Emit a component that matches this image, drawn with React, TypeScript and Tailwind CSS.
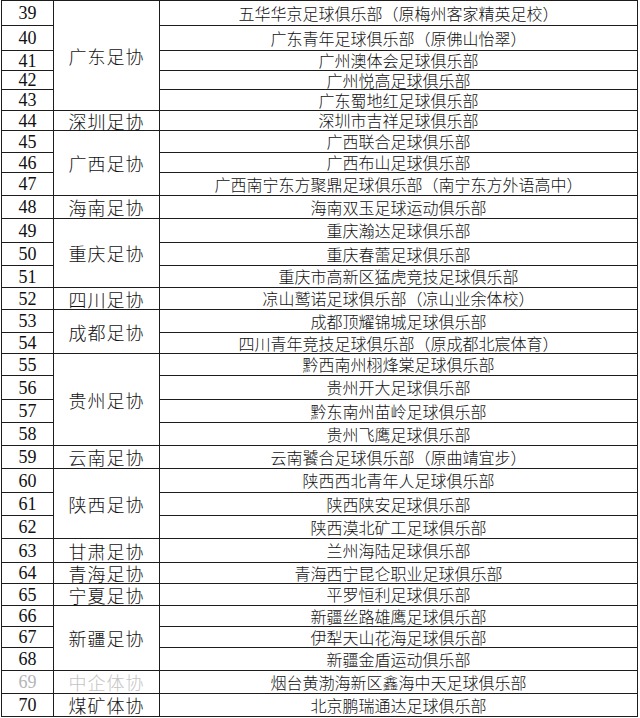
import React from 'react';

type Row = {
  no: number;
  h: string;
  club: string;
  assoc?: string;
  span?: number;
  faded?: boolean;
};

const rows: Row[] = [
  { no: 39, h: 'h-[25px]', assoc: '广东足协', span: 5, club: '五华华京足球俱乐部（原梅州客家精英足校）' },
  { no: 40, h: 'h-[25px]', club: '广东青年足球俱乐部（原佛山怡翠）' },
  { no: 41, h: 'h-[20px]', club: '广州澳体会足球俱乐部' },
  { no: 42, h: 'h-[19px]', club: '广州悦高足球俱乐部' },
  { no: 43, h: 'h-[21px]', club: '广东蜀地红足球俱乐部' },
  { no: 44, h: 'h-[20px]', assoc: '深圳足协', span: 1, club: '深圳市吉祥足球俱乐部' },
  { no: 45, h: 'h-[22px]', assoc: '广西足协', span: 3, club: '广西联合足球俱乐部' },
  { no: 46, h: 'h-[20px]', club: '广西布山足球俱乐部' },
  { no: 47, h: 'h-[23px]', club: '广西南宁东方聚鼎足球俱乐部（南宁东方外语高中）' },
  { no: 48, h: 'h-[23px]', assoc: '海南足协', span: 1, club: '海南双玉足球运动俱乐部' },
  { no: 49, h: 'h-[24px]', assoc: '重庆足协', span: 3, club: '重庆瀚达足球俱乐部' },
  { no: 50, h: 'h-[23px]', club: '重庆春蕾足球俱乐部' },
  { no: 51, h: 'h-[22px]', club: '重庆市高新区猛虎竞技足球俱乐部' },
  { no: 52, h: 'h-[22px]', assoc: '四川足协', span: 1, club: '凉山鹫诺足球俱乐部（凉山业余体校）' },
  { no: 53, h: 'h-[23px]', assoc: '成都足协', span: 2, club: '成都顶耀锦城足球俱乐部' },
  { no: 54, h: 'h-[21px]', club: '四川青年竞技足球俱乐部（原成都北宸体育）' },
  { no: 55, h: 'h-[22px]', assoc: '贵州足协', span: 4, club: '黔西南州栩烽棠足球俱乐部' },
  { no: 56, h: 'h-[24px]', club: '贵州开大足球俱乐部' },
  { no: 57, h: 'h-[23px]', club: '黔东南州苗岭足球俱乐部' },
  { no: 58, h: 'h-[23px]', club: '贵州飞鹰足球俱乐部' },
  { no: 59, h: 'h-[23px]', assoc: '云南足协', span: 1, club: '云南饕合足球俱乐部（原曲靖宜步）' },
  { no: 60, h: 'h-[24px]', assoc: '陕西足协', span: 3, club: '陕西西北青年人足球俱乐部' },
  { no: 61, h: 'h-[23px]', club: '陕西陕安足球俱乐部' },
  { no: 62, h: 'h-[23px]', club: '陕西漠北矿工足球俱乐部' },
  { no: 63, h: 'h-[24px]', assoc: '甘肃足协', span: 1, club: '兰州海陆足球俱乐部' },
  { no: 64, h: 'h-[21px]', assoc: '青海足协', span: 1, club: '青海西宁昆仑职业足球俱乐部' },
  { no: 65, h: 'h-[22px]', assoc: '宁夏足协', span: 1, club: '平罗恒利足球俱乐部' },
  { no: 66, h: 'h-[21px]', assoc: '新疆足协', span: 3, club: '新疆丝路雄鹰足球俱乐部' },
  { no: 67, h: 'h-[21px]', club: '伊犁天山花海足球俱乐部' },
  { no: 68, h: 'h-[23px]', club: '新疆金盾运动俱乐部' },
  { no: 69, h: 'h-[23px]', assoc: '中企体协', span: 1, faded: true, club: '烟台黄渤海新区鑫海中天足球俱乐部' },
  { no: 70, h: 'h-[23px]', assoc: '煤矿体协', span: 1, club: '北京鹏瑞通达足球俱乐部' },
];

const cjk = "font-['Noto_Sans_CJK_SC',sans-serif] font-light";

export default function App() {
  return (
    <div className="w-[640px] h-[718px] bg-white overflow-hidden text-[#111]">
      <table className="ml-[1px] w-[637px] table-fixed border-collapse">
        <colgroup>
          <col className="w-[52px]" />
          <col className="w-[106px]" />
          <col />
        </colgroup>
        <tbody>
          {rows.map((r) => (
            <tr key={r.no} className={r.h}>
              <td
                className={`border-[1.5px] border-[#1c1c1c] p-0 text-center align-middle leading-[16px] font-['Liberation_Serif',serif] text-[18px] ${
                  r.faded ? 'text-[#b5b5b5]' : ''
                }`}
              >
                {r.no}
              </td>
              {r.assoc && (
                <td
                  rowSpan={r.span}
                  className={`border-[1.5px] border-[#1c1c1c] p-0 text-center align-middle leading-[16px] text-[18px] tracking-[1px] ${cjk} ${
                    r.faded ? 'text-[#c4c4c4] border-x-[#d0d0d0] border-dashed' : ''
                  }`}
                >
                  {r.assoc}
                </td>
              )}
              <td
                className={`border-[1.5px] border-[#1c1c1c] p-0 text-center align-middle leading-[15px] text-[16px] whitespace-nowrap ${cjk}`}
              >
                {r.club}
              </td>
            </tr>
          ))}
        </tbody>
      </table>
    </div>
  );
}
